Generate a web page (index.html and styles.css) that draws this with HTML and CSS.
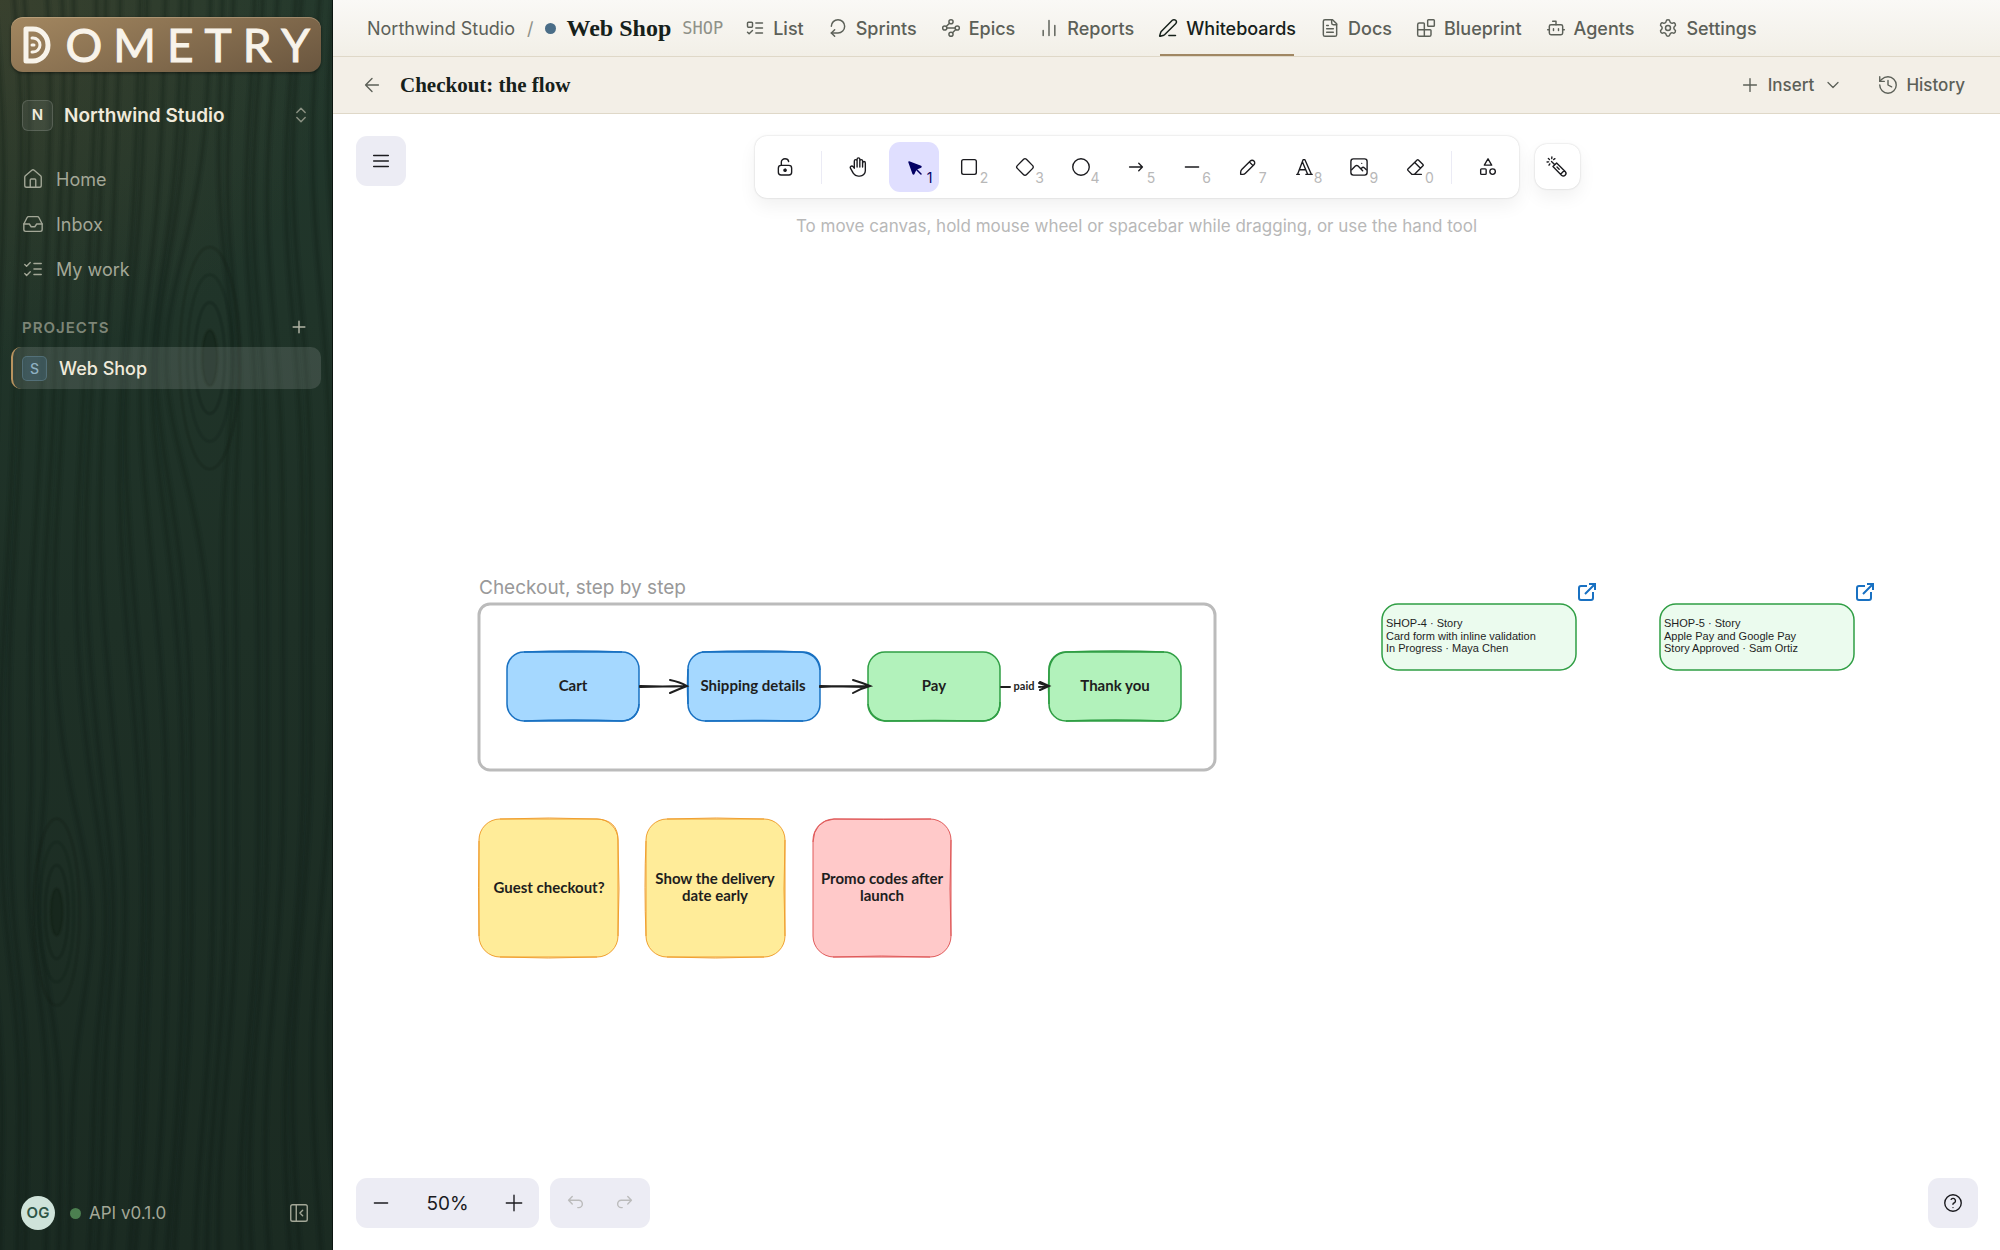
FILE: index.html
```html
<!DOCTYPE html>
<html lang="en">
  <head>
    <meta charset="UTF-8" />
    <meta name="viewport" content="width=device-width, initial-scale=1.0" />
    <title>Checkout: the flow</title>
    <link rel="stylesheet" href="styles.css">
  </head>
  <body>
    <div class="app">
      <aside class="sidebar">
        <svg class="grain" id="grain" viewBox="0 0 334 1250" preserveAspectRatio="none" aria-hidden="true"></svg>

        <a class="logo" href="#">
          <svg class="logo-mark" viewBox="0 0 28 38"><path d="M3 3v32h7a15 16 0 0 0 0-32z"/><path d="M9 12h1a7 7 0 0 1 0 14H9"/><path d="M9 19h2"/></svg>
          <span class="wordmark">OMETRY</span>
        </a>

        <button class="org">
          <span class="org-badge">N</span>
          <span class="org-name">Northwind Studio</span>
          <svg class="icon" viewBox="0 0 24 24"><path d="m7 15 5 5 5-5"/><path d="m7 9 5-5 5 5"/></svg>
        </button>

        <nav class="side-nav">
          <a href="#"><svg class="icon" viewBox="0 0 24 24"><path d="M15 21v-8a1 1 0 0 0-1-1h-4a1 1 0 0 0-1 1v8"/><path d="M3 10a2 2 0 0 1 .709-1.528l7-6a2 2 0 0 1 2.582 0l7 6A2 2 0 0 1 21 10v9a2 2 0 0 1-2 2H5a2 2 0 0 1-2-2z"/></svg>Home</a>
          <a href="#"><svg class="icon" viewBox="0 0 24 24"><path d="M22 12h-6l-2 3h-4l-2-3H2"/><path d="M5.45 5.11 2 12v6a2 2 0 0 0 2 2h16a2 2 0 0 0 2-2v-6l-3.45-6.89A2 2 0 0 0 16.76 4H7.24a2 2 0 0 0-1.79 1.11z"/></svg>Inbox</a>
          <a href="#"><svg class="icon" viewBox="0 0 24 24"><path d="m3 17 2 2 4-4"/><path d="m3 7 2 2 4-4"/><path d="M13 6h8M13 12h8M13 18h8"/></svg>My work</a>
        </nav>

        <div class="section-head">
          <span>PROJECTS</span>
          <button aria-label="New project"><svg class="icon" viewBox="0 0 24 24"><path d="M5 12h14M12 5v14"/></svg></button>
        </div>
        <a class="project" href="#"><span class="project-badge">S</span>Web Shop</a>

        <div class="side-foot">
          <span class="avatar">OG</span>
          <span class="status-dot"></span>
          <span class="version">API v0.1.0</span>
          <button aria-label="Collapse sidebar"><svg class="icon" viewBox="0 0 24 24"><rect x="3" y="3" width="18" height="18" rx="2"/><path d="M9 3v18"/><path d="m16 15-3-3 3-3"/></svg></button>
        </div>
      </aside>

      <main class="main">
        <header class="topbar">
          <div class="crumbs">
            <a href="#">Northwind Studio</a>
            <span class="slash">/</span>
            <span class="project-dot"></span>
            <h1>Web Shop</h1>
            <span class="key">SHOP</span>
          </div>
          <nav class="tabs">
            <a href="#"><svg class="icon" viewBox="0 0 24 24"><rect x="3" y="5" width="6" height="6" rx="1"/><path d="m3 17 2 2 4-4"/><path d="M13 6h8M13 12h8M13 18h8"/></svg>List</a>
            <a href="#"><svg class="icon" viewBox="0 0 24 24"><path d="M4 10c0-4.4 3.6-8 8-8s8 3.6 8 8-3.6 8-8 8H4"/><path d="m8 22-4-4 4-4"/></svg>Sprints</a>
            <a href="#"><svg class="icon" viewBox="0 0 24 24"><circle cx="12" cy="4.5" r="2.5"/><path d="m10.2 6.3-3.9 3.9"/><circle cx="4.5" cy="12" r="2.5"/><path d="M7 12h10"/><circle cx="19.5" cy="12" r="2.5"/><path d="m13.8 17.7 3.9-3.9"/><circle cx="12" cy="19.5" r="2.5"/></svg>Epics</a>
            <a href="#"><svg class="icon" viewBox="0 0 24 24"><path d="M5 21v-6M12 21V3M19 21V9"/></svg>Reports</a>
            <a href="#" class="active"><svg class="icon" viewBox="0 0 24 24"><path d="M13 21h8"/><path d="M21.174 6.812a1 1 0 0 0-3.986-3.987L3.842 16.174a2 2 0 0 0-.5.83l-1.321 4.352a.5.5 0 0 0 .623.622l4.353-1.32a2 2 0 0 0 .83-.497z"/></svg>Whiteboards</a>
            <a href="#"><svg class="icon" viewBox="0 0 24 24"><path d="M15 2H6a2 2 0 0 0-2 2v16a2 2 0 0 0 2 2h12a2 2 0 0 0 2-2V7z"/><path d="M14 2v4a2 2 0 0 0 2 2h4M10 9H8M16 13H8M16 17H8"/></svg>Docs</a>
            <a href="#"><svg class="icon" viewBox="0 0 24 24"><path d="M10 22V7a1 1 0 0 0-1-1H4a2 2 0 0 0-2 2v12a2 2 0 0 0 2 2h12a2 2 0 0 0 2-2v-5a1 1 0 0 0-1-1H2"/><rect x="14" y="2" width="8" height="8" rx="1"/></svg>Blueprint</a>
            <a href="#"><svg class="icon" viewBox="0 0 24 24"><path d="M12 8V4H8"/><rect x="4" y="8" width="16" height="12" rx="2"/><path d="M2 14h2M20 14h2M15 13v2M9 13v2"/></svg>Agents</a>
            <a href="#"><svg class="icon" viewBox="0 0 24 24"><path d="M9.671 4.136a2.34 2.34 0 0 1 4.659 0 2.34 2.34 0 0 0 3.319 1.915 2.34 2.34 0 0 1 2.33 4.033 2.34 2.34 0 0 0 0 3.831 2.34 2.34 0 0 1-2.33 4.033 2.34 2.34 0 0 0-3.319 1.915 2.34 2.34 0 0 1-4.659 0 2.34 2.34 0 0 0-3.32-1.915 2.34 2.34 0 0 1-2.33-4.033 2.34 2.34 0 0 0 0-3.831A2.34 2.34 0 0 1 6.35 6.051a2.34 2.34 0 0 0 3.319-1.915"/><circle cx="12" cy="12" r="3"/></svg>Settings</a>
          </nav>
        </header>

        <div class="boardbar">
          <button aria-label="Back"><svg class="icon" viewBox="0 0 24 24"><path d="m12 19-7-7 7-7M19 12H5"/></svg></button>
          <h2>Checkout: the flow</h2>
          <button class="insert"><svg class="icon" viewBox="0 0 24 24"><path d="M5 12h14M12 5v14"/></svg>Insert<svg class="icon small" viewBox="0 0 24 24"><path d="m6 9 6 6 6-6"/></svg></button>
          <button class="history"><svg class="icon" viewBox="0 0 24 24"><path d="M3 12a9 9 0 1 0 9-9 9.75 9.75 0 0 0-6.74 2.74L3 8"/><path d="M3 3v5h5M12 7v5l4 2"/></svg>History</button>
        </div>

        <div class="canvas">
          <svg class="scene">
            <!-- scene is drawn in board coordinates, then panned -->
            <g transform="translate(-333 -114)">
              <text class="frame-name" x="479" y="594">Checkout, step by step</text>
              <rect class="frame" x="479" y="604" width="736" height="166" rx="11"/>

              <g class="node blue">
                <rect x="507" y="652" width="132" height="69" rx="17"/>
                <path d="M524 652q50-2 98 0M524 721q50-2 98 0q16-1 17-17"/>
                <text x="573" y="691">Cart</text>
              </g>
              <g class="node blue">
                <rect x="688" y="652" width="132" height="69" rx="17"/>
                <path d="M702 652q50-2 98 0q18 1 20 18M705 721q50-1 98 0M688 704q-1-18 0-35"/>
                <text x="753" y="691">Shipping details</text>
              </g>
              <g class="node green">
                <rect x="868" y="652" width="132" height="69" rx="17"/>
                <path d="M868 704q2 14 17 17q50-1 98 0q17-1 17-19"/>
                <text x="934" y="691">Pay</text>
              </g>
              <g class="node green">
                <rect x="1049" y="652" width="132" height="69" rx="17"/>
                <path d="M1049 670q2-16 17-18q50-2 98 0M1066 721q50-2 98 0M1049 704q-1-17 0-34"/>
                <text x="1115" y="691">Thank you</text>
              </g>

              <g class="arrow">
                <path d="M640 686q22 1 46 0M640 687l46-1M670 680q10 2 17 6q-8 3-17 7"/>
                <path d="M820 687q22-1 48-1M820 686l46 1M853 680q10 3 17 6q-8 2-17 7"/>
                <path d="M1001 687h9M1039 687l9-1M1040 682l9 4l-9 4M1039 683l9 3"/>
              </g>
              <text class="arrow-label" x="1024" y="690">paid</text>

              <g class="sticky yellow">
                <rect x="479" y="819" width="139" height="138" rx="21"/>
                <path d="M500 819q50-2 97 0q21 1 21 21q2 50 0 96M500 957q48 2 97 0M479 936q-1-50 0-95"/>
                <text x="549" y="893">Guest checkout?</text>
              </g>
              <g class="sticky yellow">
                <rect x="646" y="819" width="139" height="138" rx="21"/>
                <path d="M667 819q50-2 97 0M785 840q-2 50 0 96M667 957q48 2 97 0M646 936q-2-50 0-95"/>
                <text x="715" y="884">Show the delivery</text>
                <text x="715" y="901">date early</text>
              </g>
              <g class="sticky red">
                <rect x="813" y="819" width="138" height="138" rx="21"/>
                <path d="M813 842q1-21 21-23q50 1 97 0M951 840q-2 50 0 96M833 957q48-2 97 0"/>
                <text x="882" y="884">Promo codes after</text>
                <text x="882" y="901">launch</text>
              </g>

              <g class="card">
                <rect x="1382" y="604" width="194" height="66" rx="16"/>
                <text x="1386" y="627">SHOP-4 · Story</text>
                <text x="1386" y="640">Card form with inline validation</text>
                <text x="1386" y="652">In Progress · Maya Chen</text>
              </g>
              <a class="card-link" href="#" aria-label="Open SHOP-4"><path d="M1587 586h-6a2 2 0 0 0-2 2v10a2 2 0 0 0 2 2h10a2 2 0 0 0 2-2v-6M1585 594l10-10M1589 584h6v6"/></a>
              <g class="card">
                <rect x="1660" y="604" width="194" height="66" rx="16"/>
                <text x="1664" y="627">SHOP-5 · Story</text>
                <text x="1664" y="640">Apple Pay and Google Pay</text>
                <text x="1664" y="652">Story Approved · Sam Ortiz</text>
              </g>
              <a class="card-link" href="#" aria-label="Open SHOP-5"><path d="M1865 586h-6a2 2 0 0 0-2 2v10a2 2 0 0 0 2 2h10a2 2 0 0 0 2-2v-6M1863 594l10-10M1867 584h6v6"/></a>
            </g>
          </svg>

          <div class="overlay">
            <div class="overlay-top">
              <button class="soft-btn" aria-label="Menu"><svg class="icon" viewBox="0 0 24 24"><path d="M4 6h16M4 12h16M4 18h16"/></svg></button>
              <div class="tools-area">
                <div class="tools-col">
                  <div class="tools">
                    <button aria-label="Lock"><svg class="icon" viewBox="0 0 20 20"><path d="M13.542 8.542H6.458a2.5 2.5 0 0 0-2.5 2.5v3.75a2.5 2.5 0 0 0 2.5 2.5h7.084a2.5 2.5 0 0 0 2.5-2.5v-3.75a2.5 2.5 0 0 0-2.5-2.5Z"/><path class="solid" d="M10 13.958a1.042 1.042 0 1 0 0-2.083 1.042 1.042 0 0 0 0 2.083Z"/><path d="M6.667 8.333V5.417C6.667 3.806 8.159 2.5 10 2.5c1.5 0 3 .8 3.333 2.5"/></svg></button>
                    <span class="divider"></span>
                    <button aria-label="Hand"><svg class="icon" viewBox="0 0 24 24"><path d="M8 13v-7.500a1.500 1.500 0 0 1 3 0v6.500M11 5.500v-2a1.500 1.500 0 1 1 3 0v8.500M14 5.500a1.500 1.500 0 0 1 3 0v6.500"/><path d="M17 7.500a1.500 1.500 0 0 1 3 0v8.500a6 6 0 0 1-6 6h-2h.208a6 6 0 0 1-5.012-2.700a69.740 69.740 0 0 1-.196-.300c-.312-.479-1.407-2.388-3.286-5.728a1.500 1.500 0 0 1 .536-2.022a1.867 1.867 0 0 1 2.280 .280l1.470 1.470"/></svg></button>
                    <button class="selected" aria-label="Selection"><svg class="icon" viewBox="0 0 22 22"><path class="solid" d="M6 6l4.153 11.793a.365.365 0 0 0 .331.207.366.366 0 0 0 .332-.207L13 13l4.787-1.994a.355.355 0 0 0 .213-.323.355.355 0 0 0-.213-.323L6 6Z"/><path d="m13.500 13.500 4.500 4.500"/></svg><span class="hotkey">1</span></button>
                    <button aria-label="Rectangle"><svg class="icon" viewBox="0 0 24 24"><rect x="4" y="4" width="16" height="16" rx="2"/></svg><span class="hotkey">2</span></button>
                    <button aria-label="Diamond"><svg class="icon" viewBox="0 0 24 24"><path d="M10.500 20.400l-6.900-6.900c-.781-.781-.781-2.219 0-3l6.900-6.900c.781-.781 2.219-.781 3 0l6.900 6.900c.781 .781 .781 2.219 0 3l-6.900 6.900c-.781 .781-2.219 .781-3 0z"/></svg><span class="hotkey">3</span></button>
                    <button aria-label="Ellipse"><svg class="icon" viewBox="0 0 24 24"><circle cx="12" cy="12" r="9"/></svg><span class="hotkey">4</span></button>
                    <button aria-label="Arrow"><svg class="icon" viewBox="0 0 24 24"><path d="M5 12h14M15 16l4-4M15 8l4 4"/></svg><span class="hotkey">5</span></button>
                    <button aria-label="Line"><svg class="icon" viewBox="0 0 20 20"><path d="M4 10h12"/></svg><span class="hotkey">6</span></button>
                    <button aria-label="Draw"><svg class="icon" viewBox="0 0 20 20"><path d="m7.643 15.690 7.774-7.773a2.357 2.357 0 1 0-3.334-3.334L4.310 12.357a3.333 3.333 0 0 0-.977 2.357v1.953h1.953c.884 0 1.732-.352 2.357-.977ZM11.250 5.417l3.333 3.333"/></svg><span class="hotkey">7</span></button>
                    <button aria-label="Text"><svg class="icon" viewBox="0 0 24 24"><path d="M4 20h3M14 20h7M6.900 15h6.900M10.200 6.300L16 20M5 20l6-16h2l7 16"/></svg><span class="hotkey">8</span></button>
                    <button aria-label="Insert image"><svg class="icon" viewBox="0 0 20 20"><path d="M12.500 6.667h.010"/><rect x="2.625" y="2.625" width="14.750" height="14.750" rx="2.284"/><path d="m3.333 12.500 3.334-3.333c.773-.745 1.726-.745 2.500 0l4.166 4.166M11.667 11.667l.833-.834c.774-.744 1.726-.744 2.500 0l1.667 1.667"/></svg><span class="hotkey">9</span></button>
                    <button aria-label="Eraser"><svg class="icon" viewBox="0 0 24 24"><path d="M19 20h-10.500l-4.210-4.300a1 1 0 0 1 0-1.410l10-10a1 1 0 0 1 1.410 0l5 5a1 1 0 0 1 0 1.410l-9.200 9.300M18 13.300l-6.300-6.300"/></svg><span class="hotkey">0</span></button>
                    <span class="divider"></span>
                    <button aria-label="More tools"><svg class="icon" viewBox="0 0 24 24"><path d="M12 3l-4 7h8z"/><circle cx="17" cy="17" r="3"/><rect x="4" y="14" width="6" height="6" rx="1"/></svg></button>
                  </div>
                  <p class="hint">To move canvas, hold mouse wheel or spacebar while dragging, or use the hand tool</p>
                </div>
                <button class="laser" aria-label="Laser pointer"><svg class="icon" viewBox="0 0 20 20"><g transform="rotate(90 10 10)"><path d="m9.644 13.690 7.774-7.773a2.357 2.357 0 0 0-3.334-3.334l-7.773 7.774L8 12l1.643 1.690ZM13.250 3.417l3.333 3.333M10 10l2-2M5 15l3-3M2.156 17.894l1-1M5.453 19.029l-.144-1.407M2.377 11.887l.866 1.118M8.354 17.273l-1.194-.758M.953 14.652l1.408.130"/></g></svg></button>
              </div>
            </div>

            <div class="overlay-bottom">
              <div class="soft-group zoom">
                <button aria-label="Zoom out"><svg class="icon" viewBox="0 0 20 20"><path d="M4 10h12"/></svg></button>
                <button class="zoom-value">50%</button>
                <button aria-label="Zoom in"><svg class="icon" viewBox="0 0 20 20"><path d="M10 3v14M3 10h14"/></svg></button>
              </div>
              <div class="soft-group">
                <button disabled aria-label="Undo"><svg class="icon" viewBox="0 0 20 20"><path d="M7.500 10.833 4.167 7.500 7.500 4.167M4.167 7.500h9.166a3.333 3.333 0 0 1 0 6.667H12.500"/></svg></button>
                <button disabled aria-label="Redo"><svg class="icon" viewBox="0 0 20 20"><path d="M12.500 10.833 15.833 7.500 12.500 4.167M15.833 7.500H6.667a3.333 3.333 0 1 0 0 6.667H7.500"/></svg></button>
              </div>
              <button class="soft-btn help" aria-label="Help"><svg class="icon" viewBox="0 0 24 24"><circle cx="12" cy="12" r="9"/><path d="M12 17v.010M12 13.500a1.500 1.500 0 0 1 1-1.500 2.600 2.600 0 1 0-3-4"/></svg></button>
            </div>
          </div>
        </div>
      </main>
    </div>

    <script src="grain.js"></script>
  </body>
</html>
```
FILE: styles.css
```css
* {
  box-sizing: border-box;
}

body {
  margin: 0;
  font-family: Inter, "Liberation Sans", sans-serif;
  font-size: 18px;
  color: #5c6058;
}

a {
  color: inherit;
  text-decoration: none;
}

button {
  display: flex;
  align-items: center;
  justify-content: center;
  padding: 0;
  border: 0;
  background: none;
  color: inherit;
  font: inherit;
}

h1,
h2,
p {
  margin: 0;
}

.icon {
  width: 20px;
  height: 20px;
  flex: none;
  fill: none;
  stroke: currentColor;
  stroke-width: 1.75;
  stroke-linecap: round;
  stroke-linejoin: round;
}

.solid {
  fill: currentColor;
}

.app {
  display: flex;
  height: 100vh;
}

/* Sidebar */
.sidebar {
  position: relative;
  display: flex;
  flex-direction: column;
  width: 333px;
  flex: none;
  padding: 17px 11px 20px;
  border-right: 1px solid #0c1510;
  background:
    radial-gradient(circle at 0 0, rgba(110, 85, 50, 0.3), transparent 360px),
    linear-gradient(#22382c, #1e3026 50%, #1b2b22);
  color: #a3a797;
}

.sidebar > * {
  position: relative;
}

.sidebar > .grain {
  position: absolute;
  left: 0;
  top: 0;
  width: 100%;
  height: 100%;
}

.grain path,
.grain ellipse {
  fill: none;
  stroke: #101d16;
}

.grain .core {
  fill: #101d16;
  fill-opacity: 0.2;
}

.logo {
  display: flex;
  align-items: center;
  justify-content: space-between;
  height: 55px;
  padding: 0 0 0 12px;
  border-radius: 12px;
  background: linear-gradient(160deg, #a38760, #6a563f);
  box-shadow: inset 0 1px rgba(255, 235, 200, 0.25), 0 1px 3px rgba(0, 0, 0, 0.5);
}

.logo-mark {
  width: 28px;
  height: 38px;
  fill: none;
  stroke: #f8f3ea;
  stroke-width: 5;
  stroke-linecap: round;
  stroke-linejoin: round;
}

.logo-mark path + path {
  stroke-width: 3;
}

.wordmark {
  font-family: Lato, sans-serif;
  font-size: 46px;
  line-height: 55px;
  letter-spacing: 11px;
  color: #f8f3ea;
  -webkit-text-stroke: 1px #f8f3ea;
}

.org {
  gap: 11px;
  height: 48px;
  margin-top: 19px;
  padding: 0 10px 0 11px;
}

.org-badge {
  width: 31px;
  height: 31px;
  border: 1px solid rgba(255, 255, 255, 0.14);
  border-radius: 6px;
  background: rgba(255, 255, 255, 0.08);
  color: #f0eadb;
  font-size: 15px;
  font-weight: 600;
  line-height: 28px;
}

.org-name {
  flex: 1;
  color: #f0eadb;
  font-size: 19px;
  font-weight: 600;
  text-align: left;
}

.org .icon {
  color: #8b9183;
}

.side-nav {
  display: flex;
  flex-direction: column;
  gap: 5px;
  margin-top: 20px;
}

.side-nav a {
  display: flex;
  align-items: center;
  gap: 12px;
  height: 40px;
  padding: 0 11px;
}

.side-nav .icon,
.side-foot .icon,
.boardbar .icon {
  width: 22px;
  height: 22px;
  stroke-width: 1.5;
}

.section-head {
  display: flex;
  align-items: center;
  justify-content: space-between;
  height: 32px;
  margin-top: 22px;
  padding: 0 12px 0 11px;
  color: #7d8577;
  font-size: 15px;
  font-weight: 600;
  letter-spacing: 1px;
}

.section-head .icon {
  color: #b3b5a6;
}

.project {
  display: flex;
  align-items: center;
  gap: 12px;
  height: 42px;
  margin-top: 4px;
  padding-left: 9px;
  border-left: 2px solid #b8935f;
  border-radius: 10px;
  background: rgba(255, 255, 255, 0.12);
  color: #f0eadb;
  font-weight: 500;
}

.project-badge {
  width: 25px;
  height: 25px;
  border: 1px solid rgba(130, 170, 190, 0.3);
  border-radius: 5px;
  background: rgba(75, 115, 140, 0.35);
  color: #8fb0c2;
  font-size: 14px;
  line-height: 24px;
  text-align: center;
}

.side-foot {
  display: flex;
  align-items: center;
  margin-top: auto;
  padding: 0 11px 0 10px;
  font-size: 17px;
}

.avatar {
  width: 34px;
  height: 34px;
  border-radius: 50%;
  background: #cfe3da;
  color: #2f5546;
  font-size: 15px;
  font-weight: 600;
  line-height: 34px;
  text-align: center;
}

.status-dot {
  width: 11px;
  height: 11px;
  margin: 0 8px 0 15px;
  border-radius: 50%;
  background: #4c7f50;
}

.version {
  flex: 1;
}

/* Header */
.main {
  display: flex;
  flex-direction: column;
  flex: 1;
  min-width: 0;
}

.topbar {
  display: flex;
  align-items: center;
  height: 57px;
  padding-left: 34px;
  border-bottom: 1px solid #dfd8c8;
  background: linear-gradient(#faf9f6, #f2efe7);
  white-space: nowrap;
}

.crumbs {
  display: flex;
  align-items: center;
}

.slash {
  margin: 0 11px 0 12px;
  color: #8f9188;
}

.project-dot {
  width: 11px;
  height: 11px;
  margin-right: 11px;
  border-radius: 50%;
  background: #4a6d87;
}

h1,
h2 {
  color: #16211b;
  font-family: "Liberation Serif", serif;
  font-weight: 700;
}

h1 {
  font-size: 24px;
}

.key {
  margin-left: 11px;
  color: #8f9188;
  font-family: "DejaVu Sans Mono", monospace;
  font-size: 17px;
}

.tabs {
  display: flex;
  gap: 24px;
  height: 56px;
  margin-left: 22px;
  font-weight: 500;
}

.tabs a {
  position: relative;
  display: flex;
  align-items: center;
  gap: 8px;
}

.tabs .active {
  color: #16211b;
}

.tabs .active::after {
  content: "";
  position: absolute;
  left: 2px;
  right: 2px;
  bottom: 0;
  height: 2px;
  background: #a08763;
}

.boardbar {
  display: flex;
  align-items: center;
  height: 57px;
  padding: 0 35px 0 28px;
  border-bottom: 1px solid #dfd8c8;
  background: #f3efe7;
  font-size: 17px;
  font-weight: 500;
}

h2 {
  flex: 1;
  margin-left: 17px;
  font-size: 21px;
}

.boardbar button {
  gap: 7px;
}

.insert {
  margin-right: 34px;
}

.boardbar .small {
  width: 20px;
  height: 20px;
  margin-left: 2px;
}

/* Whiteboard */
.canvas {
  position: relative;
  flex: 1;
  overflow: hidden;
  background: #fff;
  color: #1b1b1f;
}

.scene {
  position: absolute;
  width: 100%;
  height: 100%;
}

.frame {
  fill: none;
  stroke: #bbb;
  stroke-width: 3;
}

.frame-name {
  fill: #999;
  font-size: 19px;
}

.node,
.sticky {
  stroke-width: 1.5;
  font-family: Lato, sans-serif;
  font-size: 15px;
  font-weight: 700;
  text-anchor: middle;
}

.sticky {
  stroke-width: 1;
}

.node path,
.sticky path {
  fill: none;
}

.node text,
.sticky text {
  fill: #1e1e1e;
  stroke: none;
}

.blue {
  fill: #a5d8ff;
  stroke: #1971c2;
}

.green {
  fill: #b2f2bb;
  stroke: #2f9e44;
}

.yellow {
  fill: #ffec99;
  stroke: #f0a030;
}

.red {
  fill: #ffc9c9;
  stroke: #e05a5a;
}

.arrow {
  fill: none;
  stroke: #1e1e1e;
  stroke-width: 2;
  stroke-linecap: round;
}

.arrow-label {
  fill: #1e1e1e;
  font-family: Lato, sans-serif;
  font-size: 11px;
  font-weight: 700;
  text-anchor: middle;
}

.card {
  font-family: "Liberation Sans", sans-serif;
  font-size: 11px;
}

.card rect {
  fill: #ebfbee;
  stroke: #2f9e44;
  stroke-width: 1.5;
}

.card text {
  fill: #1e1e1e;
}

.card-link {
  fill: none;
  stroke: #1971c2;
  stroke-width: 2;
}

.overlay {
  position: relative;
  display: flex;
  flex-direction: column;
  justify-content: space-between;
  height: 100%;
  padding: 22px 22px 22px 23px;
}

.overlay-top {
  display: flex;
  align-items: flex-start;
}

.tools-area {
  display: flex;
  align-items: flex-start;
  justify-content: center;
  flex: 1;
  gap: 16px;
  margin-right: 50px;
}

.tools {
  display: flex;
  align-items: center;
  gap: 6px;
  width: 764px;
  padding: 6px;
  border-radius: 12px;
  background: #fff;
  box-shadow: 0 0 2px rgba(0, 0, 0, 0.2), 0 8px 18px rgba(0, 0, 0, 0.06);
}

.tools button {
  position: relative;
  flex: 1;
  height: 50px;
  border-radius: 11px;
}

.overlay .icon {
  width: 22px;
  height: 22px;
  stroke-width: 1.5;
}

.overlay .icon[viewBox="0 0 20 20"] {
  stroke-width: 1.25;
}

.tools .selected {
  background: #e0dfff;
  color: #030064;
}

.divider {
  width: 1px;
  height: 33px;
  margin: 0 5px;
  background: #ebebf5;
}

.hotkey {
  position: absolute;
  right: 6px;
  bottom: 6px;
  color: #b8b8b8;
  font-size: 14px;
}

.selected .hotkey {
  color: #030064;
}

.hint {
  margin-top: 17px;
  color: #b8b8b8;
  font-size: 17px;
  line-height: 22px;
  text-align: center;
}

.laser {
  width: 45px;
  height: 45px;
  margin-top: 8px;
  border-radius: 12px;
  box-shadow: 0 0 2px rgba(0, 0, 0, 0.2), 0 8px 18px rgba(0, 0, 0, 0.06);
}

.overlay-bottom {
  display: flex;
  gap: 11px;
}

.soft-btn,
.soft-group {
  height: 50px;
  border-radius: 11px;
  background: #ececf4;
}

.soft-btn {
  width: 50px;
}

.soft-group {
  display: flex;
}

.soft-group button {
  width: 50px;
}

.soft-group .zoom-value {
  width: 83px;
  font-size: 19px;
}

.soft-group button:disabled {
  color: #bbb;
}

.help {
  margin-left: auto;
}
```
FILE: grain.js
```js
// Wood grain: vertical lines that bend round two knots
const knots = [
  { x: 211, y: 358, rx: 34, ry: 125 },
  { x: 57, y: 912, rx: 26, ry: 105 },
];
const grain = document.getElementById('grain');

function add(name, attrs) {
  const el = document.createElementNS('http://www.w3.org/2000/svg', name);
  for (const key in attrs) el.setAttribute(key, attrs[key]);
  grain.appendChild(el);
}

for (let i = 0; i < 24; i++) {
  const base = i * 15 - 6 + Math.sin(i * 2.3) * 4;
  let d = '';
  for (let y = -10; y <= 1260; y += 10) {
    let x = base + Math.sin(y / 150 + i * 0.17) * 9 + Math.sin(y / 71 + i * 0.4) * 2;
    knots.forEach((k) => {
      const off = base - k.x;
      const near = Math.exp(-(((y - k.y) / (k.ry * 1.1)) ** 2));
      x += Math.sign(off) * (k.rx - 2) * near * Math.exp(-Math.abs(off) / 40);
    });
    d += (d ? 'L' : 'M') + x.toFixed(1) + ' ' + y;
  }
  // wide faint strokes under a narrow one give each line soft edges
  add('path', { d, 'stroke-width': 9, 'stroke-opacity': 0.08 });
  add('path', { d, 'stroke-width': 5, 'stroke-opacity': 0.1 });
  add('path', { d, 'stroke-width': 2, 'stroke-opacity': 0.14 });
}

knots.forEach((k) => {
  for (let r = 1; r <= 4; r++) {
    const ring = {
      cx: k.x,
      cy: k.y,
      rx: (k.rx * r) / 4.5,
      ry: (k.ry * r) / 4.5,
      'stroke-opacity': 0.17 - r * 0.015,
    };
    if (r === 1) ring.class = 'core';
    add('ellipse', { ...ring, 'stroke-width': 4 });
    add('ellipse', { ...ring, 'stroke-width': 2 });
  }
});
```
